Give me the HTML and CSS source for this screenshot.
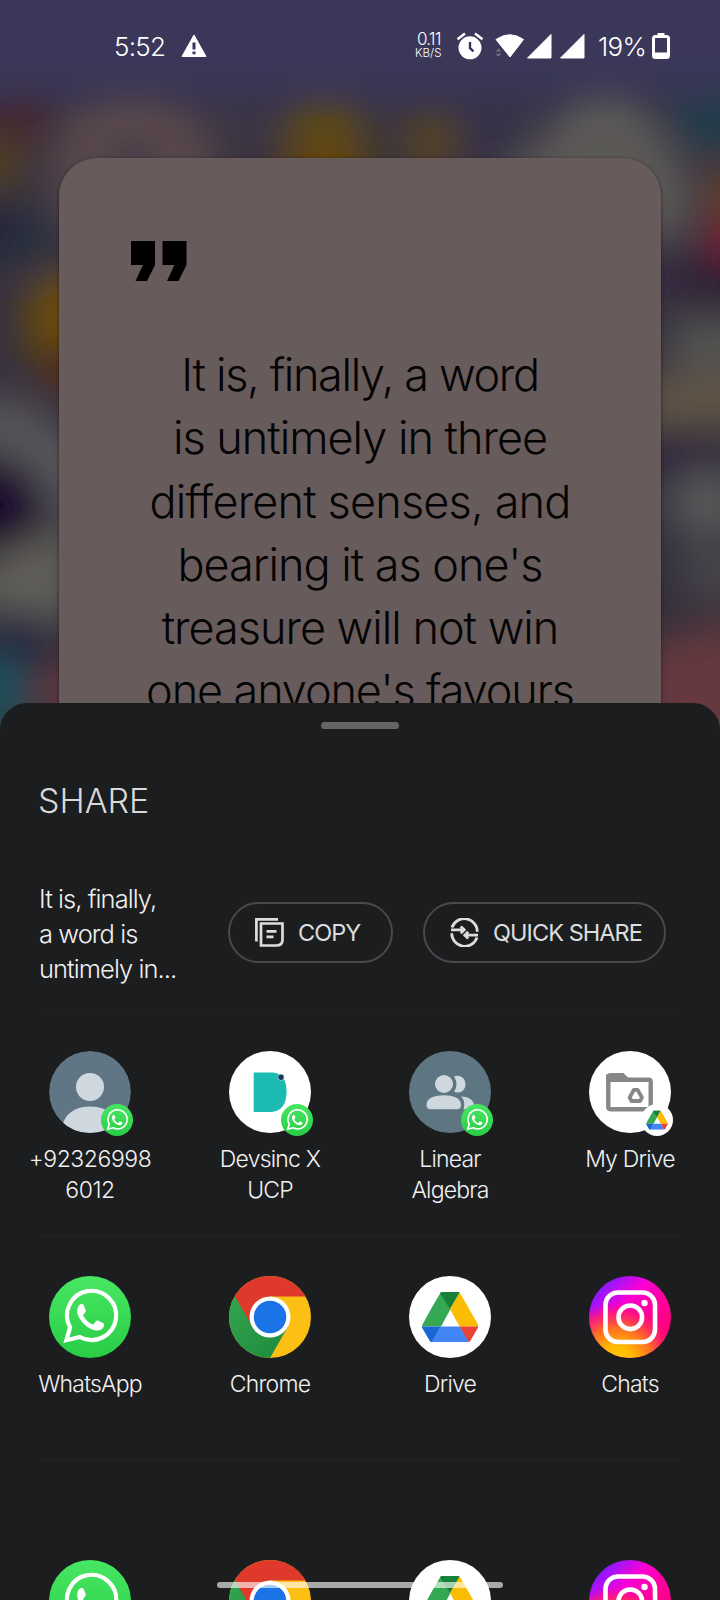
FILE: index.html
```html
<!DOCTYPE html>
<html lang="en">
<head>
<meta charset="utf-8">
<title>Share</title>
<link rel="stylesheet" href="styles.css">
</head>
<body>
<svg class="sprite" width="0" height="0" aria-hidden="true">
  <defs>
    <linearGradient id="waGreen" x1="0" y1="0" x2="0" y2="1"><stop offset="0" stop-color="#48e763"/><stop offset="1" stop-color="#29cc45"/></linearGradient>
    <linearGradient id="igPurple" x1="0" y1="0" x2="1" y2="1"><stop offset="0" stop-color="#5a1cff"/><stop offset=".2" stop-color="#a414f8"/><stop offset=".38" stop-color="#fb00d4"/><stop offset=".6" stop-color="#ff009a"/><stop offset="1" stop-color="#ff0060"/></linearGradient>
    <radialGradient id="igYellow" gradientUnits="userSpaceOnUse" cx="28" cy="88" r="62"><stop offset="0" stop-color="#ffd600"/><stop offset=".3" stop-color="#ffb800"/><stop offset=".6" stop-color="#ff6a28"/><stop offset=".82" stop-color="#ff2460" stop-opacity=".75"/><stop offset="1" stop-color="#ff0090" stop-opacity="0"/></radialGradient>
    <linearGradient id="crGreen" x1="0" y1="0" x2="1" y2="1"><stop offset="0" stop-color="#36a852"/><stop offset="1" stop-color="#1c8a3b"/></linearGradient>
    <clipPath id="disc"><circle cx="41" cy="41" r="41"/></clipPath>
  </defs>
  <symbol id="whatsapp" viewBox="0 0 82 82">
    <circle cx="41" cy="41" r="41" fill="url(#waGreen)"/>
    <path d="M17.400 64.200 21.100 51.400A24.600 24.600 0 1 1 30.800 61Z" fill="none" stroke="#fff" stroke-width="4.200" stroke-linejoin="miter"/>
    <path d="M31.500 28.200c1.500-.6 2.700-.2 3.300 1.200l1.800 4.300c.4 1 .1 2-.5 2.800l-1.600 2c-.4.500-.4 1-.1 1.600 2 3.700 4.800 6.500 8.700 8.200.7.300 1.200.2 1.700-.4l2.100-2.600c.6-.8 1.400-.9 2.300-.5l4.700 2.200c.9.400 1.300.9 1.200 1.800-.4 4-3.300 5.700-6.600 5.700-5.300 0-10.800-3.400-14.800-7.800-3.300-3.600-5.600-7.500-5.600-11.600 0-3.200 1.400-5.900 3.400-6.900z" fill="#fff"/>
  </symbol>
  <symbol id="chrome" viewBox="0 0 82 82">
    <g clip-path="url(#disc)">
      <rect width="82" height="82" fill="#fcc015"/>
      <path d="M-5 10 0 82H41L58.800 51 41 20Z" fill="url(#crGreen)"/>
      <path d="M6 20.500 0 0H82V20.500H41L24 51.500Z" fill="#df392b"/>
    </g>
    <circle cx="41" cy="41" r="20.500" fill="#fff"/><circle cx="41" cy="41" r="16.300" fill="#1b73e8"/>
  </symbol>
  <symbol id="drive-mark" viewBox="0 0 57 50">
    <path d="M19 .800 10 16 1 32.500Q0 34 .300 34.500H19.500L28.500 18 38 0H21Q19.800 0 19 .800Z" fill="#34a853"/>
    <path d="M28.500 17 18.500 1.200Q19.300 0 21 0H36.500Q37.600 0 38.200.900Z" fill="#188038"/>
    <path d="M38 0.600 28.500 17 38 34.500H56.700Q57 33.500 56.200 32L39.200 2Z" fill="#fbbc04"/>
    <path d="M19 34.500H38L48 50H10.500Q9 50 8.600 49.300Z" fill="#4285f4"/>
    <path d="M.300 34.500H19L10 50Q9 50 8.300 49L1 36.500Q.400 35.500.300 34.500Z" fill="#1967d2"/>
    <path d="M38 34.500H56.700Q56.700 35.500 56 36.500L48.700 49Q48.200 49.700 47.300 49.900Z" fill="#ea4335"/>
  </symbol>
  <symbol id="drive" viewBox="0 0 82 82">
    <circle cx="41" cy="41" r="41" fill="#fff"/><use href="#drive-mark" x="12.500" y="16" width="57" height="50"/>
  </symbol>
  <symbol id="drive-badge" viewBox="0 0 32 32">
    <circle cx="16" cy="16" r="16" fill="#fff"/><use href="#drive-mark" x="5" y="6.500" width="22" height="19.300"/>
  </symbol>
  <symbol id="instagram" viewBox="0 0 82 82">
    <circle cx="41" cy="41" r="41" fill="url(#igPurple)"/><circle cx="41" cy="41" r="41" fill="url(#igYellow)"/>
    <rect x="16.500" y="16.500" width="49.500" height="49.500" rx="12.500" fill="none" stroke="#fff" stroke-width="4.600"/>
    <circle cx="41.300" cy="41.300" r="11.800" fill="none" stroke="#fff" stroke-width="4.600"/><circle cx="55.500" cy="27" r="3.200" fill="#fff"/>
  </symbol>
  <symbol id="person" viewBox="0 0 82 82">
    <g clip-path="url(#disc)"><circle cx="41" cy="41" r="41" fill="#607684"/><circle cx="41" cy="36" r="14" fill="#cfd8df"/><path d="M14 72c4-11 14-16.500 27-16.500S64 61 68 72V84H14Z" fill="#cfd8df"/></g>
  </symbol>
  <symbol id="group" viewBox="0 0 82 82">
    <circle cx="41" cy="41" r="41" fill="#5e7681"/>
    <g fill="#cfd8df"><path d="M45 25.500c6.500-2.500 11.500 2 11.500 7.800S51 43.500 45 40.800c3.300-5 3.300-10.300 0-15.300z"/><circle cx="35" cy="33" r="9"/><path d="M17.500 54c0-7 8-9.800 17.300-9.800S52 47 52 54c0 2.800-1.400 4.300-4 4.300H21.500c-2.600 0-4-1.500-4-4.300z"/><path d="M52 45.500c7.500.5 13 3.500 13 8.500 0 2.800-1.400 4.300-4 4.300h-6.500c1.500-5 1-9.500-2.500-12.800z"/></g>
  </symbol>
  <symbol id="devsinc" viewBox="0 0 82 82">
    <circle cx="41" cy="41" r="41" fill="#fff"/><path d="M24.700 21.600H42C54 21.600 57.500 30 57.500 41S53 61 41 61H24.700Z" fill="#1bbbb3"/><circle cx="52" cy="26.300" r="3.300" fill="#b5e0e2"/><circle cx="52" cy="26.300" r="2.700" fill="#17345c"/>
  </symbol>
  <symbol id="folder" viewBox="0 0 82 82">
    <circle cx="41" cy="41" r="41" fill="#fff"/><path d="M19.300 27V56q0 2.200 2.200 2.200H59.500q2.200 0 2.200-2.200V31q0-2.200-2.200-2.200H22Z" fill="none" stroke="#858789" stroke-width="4.400"/><path d="M17.200 31V26.500q0-4.500 4.500-4.500H34.500l5 5V31Z" fill="#858789"/>
    <path d="M44.800 38.800h3.700l4.500 7.800-2 3.400H42.500L40.600 46.600Z" fill="none" stroke="#858789" stroke-width="3.800" stroke-linejoin="round"/>
  </symbol>
</svg>

<div class="phone">
  <svg class="wallpaper" viewBox="0 0 720 740" aria-hidden="true">
    <defs>
      <filter id="haze" x="-15%" y="-15%" width="130%" height="130%"><feGaussianBlur stdDeviation="19"/></filter>
      <linearGradient id="base" x1="0" y1="0" x2="0" y2="1"><stop offset="0" stop-color="#3a375b"/><stop offset=".1" stop-color="#38344f"/><stop offset=".2" stop-color="#373241"/><stop offset="1" stop-color="#353039"/></linearGradient>
      <linearGradient id="top" x1="0" y1="0" x2="0" y2="1"><stop offset="0" stop-color="#3b385b"/><stop offset=".5" stop-color="#3a3759"/><stop offset="1" stop-color="#38344f" stop-opacity="0"/></linearGradient>
    </defs>
    <rect width="720" height="740" fill="url(#base)"/>
    <g filter="url(#haze)" opacity=".82">
      <rect x="-80" y="-80" width="880" height="160" fill="#3b385b"/>
      <ellipse cx="20" cy="117" rx="34" ry="28" fill="#48202c"/><circle cx="-4" cy="164" r="28" fill="#5a4418"/>
      <circle cx="132" cy="170" r="82" fill="#604e4e"/><circle cx="134" cy="166" r="22" fill="#3a3348"/>
      <ellipse cx="240" cy="125" rx="26" ry="30" fill="#3c3745"/>
      <circle cx="325" cy="136" r="42" fill="#64500f"/><ellipse cx="325" cy="172" rx="48" ry="20" fill="#754400"/>
      <circle cx="430" cy="142" r="30" fill="#61491f"/><rect x="465" y="90" width="50" height="80" fill="#343348"/>
      <path d="M500 180 550 130 575 95 605 82 635 95 692 180 684 235 650 240Z" fill="#64625c"/>
      <ellipse cx="716" cy="116" rx="46" ry="38" fill="#1d404d"/>
      <circle cx="730" cy="195" r="26" fill="#724619"/><ellipse cx="738" cy="240" rx="32" ry="34" fill="#8c1d2f"/>
      <rect x="655" y="240" width="45" height="60" fill="#34273c"/><ellipse cx="722" cy="278" rx="26" ry="26" fill="#27122f"/>
      <ellipse cx="22" cy="238" rx="50" ry="32" fill="#273140"/><ellipse cx="-8" cy="225" rx="20" ry="24" fill="#1c1532"/>
      <ellipse cx="68" cy="320" rx="44" ry="48" fill="#785200"/><ellipse cx="68" cy="368" rx="34" ry="26" fill="#582e10"/>
      <path d="M-30 395 20 400 90 450V545L45 490 -30 440Z" fill="#606062"/><ellipse cx="0" cy="505" rx="42" ry="50" fill="#15062c"/>
      <path d="M-30 570 75 520V625L-30 605Z" fill="#6a6b61"/>
      <ellipse cx="18" cy="640" rx="40" ry="30" fill="#222040"/><ellipse cx="-6" cy="692" rx="34" ry="38" fill="#135a66"/><ellipse cx="72" cy="698" rx="34" ry="38" fill="#6d3a41"/>
      <ellipse cx="712" cy="345" rx="46" ry="25" fill="#5f6058"/><path d="M640 375H760V425H640Z" fill="#6d6049"/><ellipse cx="680" cy="458" rx="50" ry="24" fill="#2d223d"/>
      <ellipse cx="708" cy="503" rx="40" ry="32" fill="#616360"/><ellipse cx="666" cy="545" rx="24" ry="34" fill="#343241"/><ellipse cx="718" cy="572" rx="34" ry="30" fill="#4d4b50"/>
      <path d="M640 645 760 615V770H630Z" fill="#6f3a40"/>
    </g>
    <rect width="720" height="120" fill="url(#top)"/>
  </svg>

  <header class="status">
    <span class="clock">5:52</span>
    <svg class="warn" viewBox="0 0 26 24"><path d="M13 1 25 22.500H1Z" fill="#fff" stroke="#fff" stroke-linejoin="round"/><path d="M11.500 8.500h3v7h-3zm0 9h3v2.800h-3z" fill="#38355a"/></svg>
    <div class="speed"><span class="rate">0.11</span><span class="unit">KB/S</span></div>
    <svg class="alarm" viewBox="0 0 28 28"><circle cx="14" cy="15.800" r="11.500" fill="#fff"/><path d="M1.500 7.200 9 1.500M26.500 7.200 19 1.500" stroke="#fff" stroke-width="2.600"/><path d="M14 10v6.200l3.500 3.200" fill="none" stroke="#38355a" stroke-width="2.400"/></svg>
    <svg class="wifi" viewBox="0 0 29 26"><path d="M1 6.500Q15-3 28.500 6.500L15 24Z" fill="#fff" stroke="#fff" stroke-linejoin="round"/><path d="M.800 18.500 3.500 15.500 6.200 18.500ZM.800 20.800 3.500 23.800 6.200 20.800Z" fill="#77758c"/></svg>
    <svg class="signal" viewBox="0 0 26 26"><path d="M25 1.500V25H1.500Z" fill="#fff" stroke="#fff" stroke-linejoin="round"/></svg>
    <svg class="signal second" viewBox="0 0 26 26"><path d="M25 1.500V25H1.500Z" fill="#fff" stroke="#fff" stroke-linejoin="round"/></svg>
    <span class="percent">19%</span>
    <svg class="battery" viewBox="0 0 18 26"><path d="M5.500 0h7v3h-7z" fill="#fff"/><rect x="1.500" y="3.500" width="15" height="21" rx="2" fill="none" stroke="#fff" stroke-width="3"/><path d="M2 19.500h14V24H2z" fill="#fff"/></svg>
  </header>

  <main class="card">
    <svg class="quotes" viewBox="0 0 56 40"><path d="M0 0H24V24L16 40H4.500L12 24H0Z"/><path d="M31.500 0H55.500V24L47.500 40H36L43.500 24H31.500Z"/></svg>
    <p class="quote"><span class="tight">It is, finally, a word</span><br>is untimely in three<br><span class="loose">different senses, and</span><br>bearing it as one's<br>treasure will not win<br><span class="snug">one anyone's favours</span></p>
  </main>

  <section class="sheet">
    <div class="handle"></div>
    <h1 class="title">SHARE</h1>
    <div class="actions">
      <p class="preview">It is, finally,<br>a word is<br>untimely in...</p>
      <button class="pill copy"><svg viewBox="0 0 29 29" fill="none" stroke="#dcdddf" stroke-width="2.700"><path d="M1.400 23.500V1.400H23"/><path d="M6 5.500H27.500V21.500Q27.500 27.500 21.500 27.500H6ZM11.500 13.300H21.500M11.500 18.800H18.500"/></svg><span>COPY</span></button>
      <button class="pill quick"><svg viewBox="0 0 29 29" fill="none" stroke="#dcdddf" stroke-width="2.800"><path d="M2 9.500A13 13 0 0 1 27.300 13.800M27 19.500A13 13 0 0 1 1.700 15.200M1 11.800H13.500M28 17.200H15.500M10.800 8.400 14.200 11.800 10.800 15.200M18.200 13.800 14.800 17.200 18.200 20.600"/></svg><span>QUICK SHARE</span></button>
    </div>
    <div class="row contacts">
      <div class="item"><div class="avatar"><svg><use href="#person"/></svg><svg class="badge"><use href="#whatsapp"/></svg></div><span class="number">+92326998<br>6012</span></div>
      <div class="item"><div class="avatar"><svg><use href="#devsinc"/></svg><svg class="badge"><use href="#whatsapp"/></svg></div><span>Devsinc X<br>UCP</span></div>
      <div class="item"><div class="avatar"><svg><use href="#group"/></svg><svg class="badge"><use href="#whatsapp"/></svg></div><span>Linear<br>Algebra</span></div>
      <div class="item"><div class="avatar"><svg><use href="#folder"/></svg><svg class="badge"><use href="#drive-badge"/></svg></div><span>My Drive</span></div>
    </div>
    <div class="row apps">
      <div class="item"><div class="avatar"><svg><use href="#whatsapp"/></svg></div><span>WhatsApp</span></div>
      <div class="item"><div class="avatar"><svg><use href="#chrome"/></svg></div><span>Chrome</span></div>
      <div class="item"><div class="avatar"><svg><use href="#drive"/></svg></div><span>Drive</span></div>
      <div class="item"><div class="avatar"><svg><use href="#instagram"/></svg></div><span>Chats</span></div>
    </div>
    <div class="row more">
      <div class="item"><div class="avatar"><svg><use href="#whatsapp"/></svg></div></div>
      <div class="item"><div class="avatar"><svg><use href="#chrome"/></svg></div></div>
      <div class="item"><div class="avatar"><svg><use href="#drive"/></svg></div></div>
      <div class="item"><div class="avatar"><svg><use href="#instagram"/></svg></div></div>
    </div>
  </section>
  <div class="homebar"></div>
</div>
</body>
</html>
```
FILE: styles.css
```css
* { box-sizing: border-box; }
body { margin: 0; background: #1c1d1f; font-family: Inter, "Liberation Sans", sans-serif; font-weight: 300; }
.sprite { position: absolute; }
svg { display: block; flex: none; }
.phone { position: relative; width: 720px; height: 1600px; overflow: hidden; background: #1c1d1f; }
.wallpaper { position: absolute; left: 0; top: 0; width: 720px; height: 740px; }

.status { position: relative; height: 92px; padding: 0 50px 0 114px; display: flex; align-items: center; color: #fff; }
.clock, .percent { font-size: 26px; line-height: 30px; letter-spacing: -0.7px; white-space: nowrap; padding-top: 1px; }
.clock { width: 67px; }
.warn { width: 26px; height: 24px; }
.speed { margin-left: auto; width: 41px; display: flex; flex-direction: column; align-items: flex-start; }
.rate { width: 30px; padding-left: 2px; font-size: 17px; line-height: 17px; letter-spacing: -0.8px; white-space: nowrap; margin-top: -2px; }
.unit { font-size: 11.500px; line-height: 11px; letter-spacing: 0.1px; }
.alarm { width: 28px; height: 28px; }
.wifi { width: 29px; height: 26px; margin-left: 11px; }
.signal { width: 26px; height: 26px; margin-left: 2px; }
.signal.second { margin-left: 7px; }
.percent { width: 54px; padding-left: 13px; }
.battery { width: 18px; height: 26px; margin-left: 13px; }

.card { position: relative; margin: 66px 59px 0; height: 620px; padding: 83px 0 0; border-radius: 38px; background: #675b5b; box-shadow: 0 1px 3px 1px rgba(30, 20, 25, .45); }
.quotes { width: 56px; height: 40px; margin-left: 72px; }
.quote { margin: 62px 0 0; text-align: center; font-size: 45px; line-height: 63.300px; letter-spacing: -1px; color: #050404; white-space: nowrap; }
.tight { letter-spacing: -1.350px; }
.loose { letter-spacing: -0.820px; }
.snug { letter-spacing: -1.100px; }

.sheet { position: absolute; left: 0; top: 703px; width: 720px; height: 897px; overflow: hidden; border-radius: 27px 27px 0 0; background: #1c1d1f; color: #f0f0f1; }
.handle { width: 78px; height: 7px; margin: 19px auto 0; border-radius: 3.500px; background: #646567; }
.title { margin: 52px 0 0 38px; font-size: 34px; line-height: 40px; font-weight: 300; letter-spacing: 0; color: #d9d9db; }
.actions { display: flex; align-items: center; margin: 59px 40px 0; height: 132px; padding-bottom: 26px; border-bottom: 1px solid #202123; }
.preview { width: 189px; margin: 2px 0 0 -1px; font-size: 25.500px; line-height: 35.300px; letter-spacing: -0.950px; white-space: nowrap; }
.pill { height: 61px; display: flex; align-items: center; padding: 0 0 0 25px; border: 2px solid #48494b; border-radius: 31px; background: none; color: #dcdddf; font: 400 23.500px/30px Inter, "Liberation Sans", sans-serif; letter-spacing: -0.950px; white-space: nowrap; }
.pill svg { width: 29px; height: 29px; margin-right: 14px; }
.copy { width: 165px; flex: none; }
.quick { width: 243px; flex: none; margin-left: 30px; }
.row { position: relative; display: grid; grid-template-columns: repeat(4, 180px); padding-top: 39px; }
.row::after { content: ""; position: absolute; left: 40px; right: 40px; bottom: 0; height: 1px; background: #222325; }
.contacts { height: 225px; }
.apps { height: 223px; }
.more { height: 200px; padding-top: 100px; }
.item { display: flex; flex-direction: column; align-items: center; text-align: center; font-size: 23px; line-height: 30.700px; letter-spacing: -0.800px; }
.number { letter-spacing: -0.450px; }
.avatar { position: relative; width: 82px; height: 82px; margin-bottom: 11px; }
.avatar svg { width: 82px; height: 82px; }
.avatar .badge { position: absolute; left: 52px; top: 53px; width: 32px; height: 32px; }
.homebar { position: absolute; left: 217px; top: 1582px; width: 286px; height: 6px; border-radius: 3px; background: rgba(255, 255, 255, .62); }
```
